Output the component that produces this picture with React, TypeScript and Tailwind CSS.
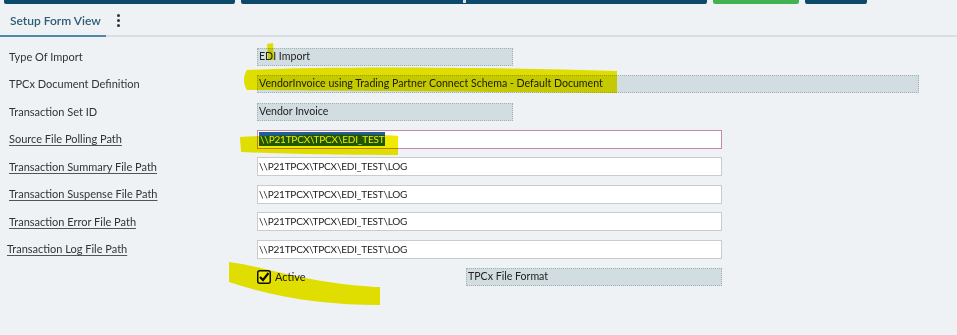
import React from "react";

const font = { fontFamily: "Lato, 'Open Sans', sans-serif" };

function ReadOnlyField({ value, wide }: { value: string; wide?: boolean }) {
  return (
    <div
      className={`flex h-[18px] items-center border border-dotted border-[#a7b1b5] bg-[#d2dde1] px-[1px] text-[10.6px] text-[#222] ${
        wide ? "w-[662px]" : "w-[256px]"
      }`}
    >
      {value}
    </div>
  );
}

function PathInput({ value, focused }: { value: string; focused?: boolean }) {
  return (
    <div
      className={`flex h-[19px] w-[465px] items-center border bg-white px-[1px] text-[10px] tracking-[-0.2px] text-[#222] ${
        focused ? "border-[#c58aa9]" : "border-[#c9cccf]"
      }`}
    >
      {focused ? (
        <span className="bg-[#1f5f9c] px-[1px] leading-[14px] text-white">{value}</span>
      ) : (
        value
      )}
    </div>
  );
}

function Row({
  label,
  link,
  indent,
  children,
}: {
  label: string;
  link?: boolean;
  indent?: boolean;
  children: React.ReactNode;
}) {
  return (
    <div className="flex h-[27.5px] items-center">
      <div className={`w-[257px] text-[11px] text-[#333] ${indent ? "pl-[7px]" : "pl-[9px]"}`}>
        <span className={link ? "underline decoration-[#555] underline-offset-2" : ""}>{label}</span>
      </div>
      {children}
    </div>
  );
}

export default function App() {
  return (
    <div className="relative h-[335px] w-[957px] overflow-hidden bg-[#eef2f5]" style={font}>
      {/* toolbar buttons cut off at the top */}
      <div className="flex h-[4px] gap-[6px] pl-[4px]">
        <div className="w-[231px] rounded-b-[2px] bg-[#0c4a6b]" />
        <div className="flex w-[466px] rounded-b-[2px] bg-[#0c4a6b]">
          <div className="ml-[222px] h-[3px] w-[3px] bg-[#e9d7e0]" />
        </div>
        <div className="w-[86px] rounded-b-[2px] bg-[#3fb34f]" />
        <div className="w-[62px] rounded-b-[2px] bg-[#0c4a6b]" />
      </div>

      {/* tab bar */}
      <div className="flex h-[33px] items-stretch border-b-2 border-[#d8dee1]">
        <div className="relative flex w-[106px] items-center pl-[10px] pt-[3px] text-[12px] font-semibold text-[#2e5c74]">
          Setup Form View
          <div className="absolute -bottom-[2px] left-0 h-[2px] w-[106px] bg-[#4f8aa4]" />
        </div>
        <div className="flex flex-col items-center justify-center gap-[2px] pl-[11px] pt-[2px]">
          <div className="h-[3px] w-[3px] rounded-full bg-[#3a2f2f]" />
          <div className="h-[3px] w-[3px] rounded-full bg-[#3a2f2f]" />
          <div className="h-[3px] w-[3px] rounded-full bg-[#3a2f2f]" />
        </div>
      </div>

      {/* form */}
      <div className="pt-[6px]">
        <Row label="Type Of Import">
          <ReadOnlyField value="EDI Import" />
        </Row>
        <Row label="TPCx Document Definition">
          <ReadOnlyField wide value="VendorInvoice using Trading Partner Connect Schema - Default Document" />
        </Row>
        <Row label="Transaction Set ID">
          <ReadOnlyField value="Vendor Invoice" />
        </Row>
        <Row label="Source File Polling Path" link>
          <PathInput focused value={"\\\\P21TPCX\\TPCX\\EDI_TEST"} />
        </Row>
        <Row label="Transaction Summary File Path" link>
          <PathInput value={"\\\\P21TPCX\\TPCX\\EDI_TEST\\LOG"} />
        </Row>
        <Row label="Transaction Suspense File Path" link>
          <PathInput value={"\\\\P21TPCX\\TPCX\\EDI_TEST\\LOG"} />
        </Row>
        <Row label="Transaction Error File Path" link>
          <PathInput value={"\\\\P21TPCX\\TPCX\\EDI_TEST\\LOG"} />
        </Row>
        <Row label="Transaction Log File Path" link indent>
          <PathInput value={"\\\\P21TPCX\\TPCX\\EDI_TEST\\LOG"} />
        </Row>
        <div className="flex h-[27.5px] items-center pl-[257px]">
          <div className="flex w-[209px] items-center gap-[4px] text-[11px] text-[#222]">
            <svg width="14" height="14" viewBox="0 0 14 14">
              <rect x="0.75" y="0.75" width="12.5" height="12.5" rx="2" fill="#fff" stroke="#111" strokeWidth="1.5" />
              <path d="M3 7 L6 10 L11.5 3" fill="none" stroke="#111" strokeWidth="2.2" />
            </svg>
            Active
          </div>
          <ReadOnlyField value="TPCx File Format" />
        </div>
      </div>

      {/* highlighter marks drawn over the screenshot */}
      <svg
        className="pointer-events-none absolute left-0 top-0 mix-blend-multiply"
        width="957"
        height="335"
        viewBox="0 0 957 335"
      >
        <g fill="#f0e900">
          <path d="M267 44 L273 43 L274 60 L268 60 Z" />
          <path d="M247 70 C 330 66, 480 67, 617 71 L 617 93 C 500 92, 350 91, 247 90 C 243 84, 243 76, 247 70 Z" />
          <path d="M240 137 C 300 134, 370 134, 398 136 L 398 155 C 350 155, 280 154, 241 152 Z" />
          <path d="M229 262 C 262 266, 300 282, 374 287 L 380 287 L 380 305 C 330 305, 280 299, 229 282 Z" />
        </g>
      </svg>
    </div>
  );
}
